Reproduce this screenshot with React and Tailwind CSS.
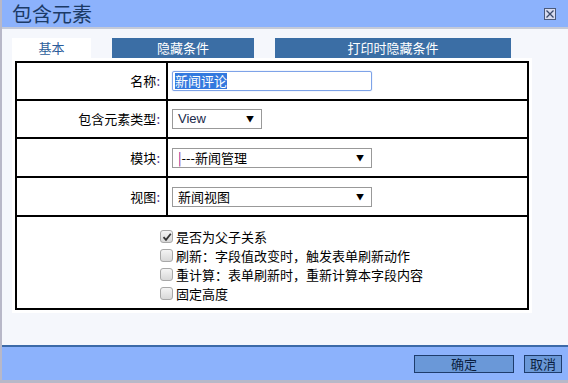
import React from "react";

const font = { fontFamily: '"Noto Sans CJK SC", "Liberation Sans", sans-serif' };

function Arrow() {
  return <span className="text-[8px] leading-none text-black">▼</span>;
}

function Row({ label, children, last, h }) {
  return (
    <div className={`flex ${h} border-b-2 border-black`}>
      <div className="w-[151px] shrink-0 border-r-2 border-black flex items-center justify-end pr-[6px] text-[13px] text-black">
        {label}
        <span className="text-[#4a2a8a]">:</span>
      </div>
      <div className="flex-1 flex items-center pl-[4px]">{children}</div>
    </div>
  );
}

function Check({ checked, children }) {
  return (
    <div className="flex items-center h-[19px] gap-[3px]">
      <span className="w-[13px] h-[13px] rounded-[3px] border border-[#a8a8a8] bg-gradient-to-b from-[#f4f4f4] to-[#d8d8d8] flex items-center justify-center">
        {checked && (
          <svg width="10" height="10" viewBox="0 0 10 10">
            <path d="M1.5 5.2 L4 7.8 L8.8 1.8" stroke="#333" strokeWidth="1.8" fill="none" />
          </svg>
        )}
      </span>
      <span className="text-[13px] text-black">{children}</span>
    </div>
  );
}

export default function App() {
  return (
    <div style={font} className="w-[568px] h-[383px] flex flex-col bg-[#f5f7fc] border-l-2 border-[#b8b8c8] overflow-hidden">
      <div className="h-[29px] bg-[#8cb2fc] border-b-2 border-[#c4cad8] flex items-center justify-between pl-[10px] pr-[12px] shrink-0">
        <span className="text-[20px] leading-none text-[#1b3a66]">包含元素</span>
        <span className="w-[12px] h-[12px] border border-[#4a5a7a] bg-[#d8dcf0] flex items-center justify-center">
          <svg width="10" height="10" viewBox="0 0 10 10">
            <path d="M1.5 1.5 L8.5 8.5 M8.5 1.5 L1.5 8.5" stroke="#3a4a6a" strokeWidth="1.3" />
          </svg>
        </span>
      </div>
      <div className="flex-1 pt-[9px] pl-[10px]">
        <div className="flex h-[20px] text-[13px]">
          <div className="w-[79px] bg-white text-[#2c5d9a] flex items-center justify-center">基本</div>
          <div className="w-[142px] ml-[21px] bg-[#3b6ea5] text-white flex items-center justify-center">隐藏条件</div>
          <div className="w-[236px] ml-[21px] bg-[#3b6ea5] text-white flex items-center justify-center">打印时隐藏条件</div>
        </div>
        <div className="w-[520px] h-[255px] bg-white p-[3px]">
          <div className="border-2 border-black h-full flex flex-col">
            <Row label="名称" h="h-[38px]">
              <div className="w-[200px] h-[20px] border border-[#7ea3e8] rounded-[2px] flex items-center px-[2px] shadow-[0_0_1px_#7ea3e8]">
                <span className="bg-[#3379de] text-white text-[13px] leading-[16px]">新闻评论</span>
              </div>
            </Row>
            <Row label="包含元素类型" h="h-[38px]">
              <div className="w-[90px] h-[20px] border border-[#999] flex items-center justify-between pl-[5px] pr-[7px]">
                <span className="text-[13px] text-[#1a2a4a]" style={{ fontFamily: '"Liberation Sans", sans-serif' }}>View</span>
                <Arrow />
              </div>
            </Row>
            <Row label="模块" h="h-[39px]">
              <div className="w-[200px] h-[20px] border border-[#999] flex items-center justify-between pl-[5px] pr-[7px]">
                <span className="text-[13px] text-black"><span className="text-[#8a108a]">|</span>---新闻管理</span>
                <Arrow />
              </div>
            </Row>
            <Row label="视图" h="h-[39px]">
              <div className="w-[200px] h-[20px] border border-[#999] flex items-center justify-between pl-[5px] pr-[7px]">
                <span className="text-[13px] text-black">新闻视图</span>
                <Arrow />
              </div>
            </Row>
            <div className="flex-1 pt-[10px] pl-[143px]">
              <Check checked>是否为父子关系</Check>
              <Check>刷新：字段值改变时，触发表单刷新动作</Check>
              <Check>重计算：表单刷新时，重新计算本字段内容</Check>
              <Check>固定高度</Check>
            </div>
          </div>
        </div>
      </div>
      <div className="h-[35px] shrink-0 bg-[#8cb2fc] border-t-2 border-[#3c6aa8] flex items-center justify-end pr-[6px] gap-[10px]">
        <button className="w-[100px] h-[18px] bg-[#6a98d8] border border-[#1e3c6c] text-[13px] leading-none text-[#0a1e40]">确定</button>
        <button className="w-[38px] h-[18px] bg-[#6a98d8] border border-[#1e3c6c] text-[13px] leading-none text-[#0a1e40]">取消</button>
      </div>
      <div className="h-[3px] shrink-0 bg-[#b8b8c8]" />
    </div>
  );
}
